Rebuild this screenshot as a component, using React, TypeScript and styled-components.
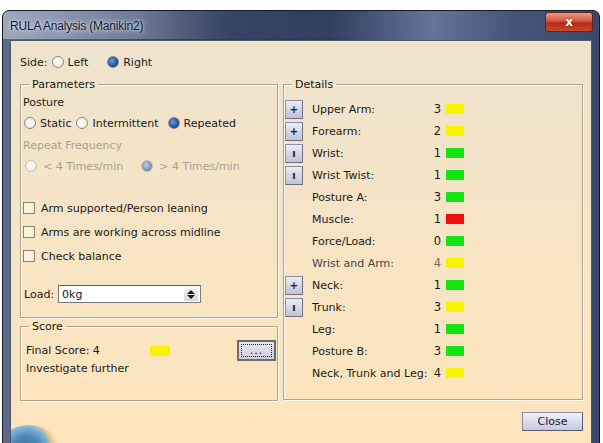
import styled, { createGlobalStyle } from "styled-components";

type Detail = {
	label: string;
	value: number;
	level: "ok" | "warn" | "bad";
	btn?: "+" | "ı";
	dim?: boolean;
};

const details: Detail[] = [
	{ label: "Upper Arm:", value: 3, level: "warn", btn: "+" },
	{ label: "Forearm:", value: 2, level: "warn", btn: "+" },
	{ label: "Wrist:", value: 1, level: "ok", btn: "ı" },
	{ label: "Wrist Twist:", value: 1, level: "ok", btn: "ı" },
	{ label: "Posture A:", value: 3, level: "ok" },
	{ label: "Muscle:", value: 1, level: "bad" },
	{ label: "Force/Load:", value: 0, level: "ok" },
	{ label: "Wrist and Arm:", value: 4, level: "warn", dim: true },
	{ label: "Neck:", value: 1, level: "ok", btn: "+" },
	{ label: "Trunk:", value: 3, level: "warn", btn: "ı" },
	{ label: "Leg:", value: 1, level: "ok" },
	{ label: "Posture B:", value: 3, level: "ok" },
	{ label: "Neck, Trunk and Leg:", value: 4, level: "warn" },
];

const swatch = {
	ok: "#12e512",
	warn: "#f8f400",
	bad: "#ec1010",
};

const GlobalStyle = createGlobalStyle`
	html, body {
		margin: 0;
		padding: 0;
		background: #fff;
	}
	body {
		font-family: "DejaVu Sans", "Liberation Sans", sans-serif;
		font-size: 11px;
		color: #1c1a18;
	}
`;

const Screen = styled.div`
	width: 603px;
	height: 443px;
	overflow: hidden;
	padding-top: 10px;
	box-sizing: border-box;
`;

const Window = styled.div`
	margin-left: 2px;
	width: 598px;
	height: 440px;
	box-sizing: border-box;
	border: 1px solid #151b29;
	border-radius: 7px 7px 0 0;
	background: linear-gradient(
		90deg,
		#5d6b88 0%,
		#4d5c80 10%,
		#2f3d5e 30%,
		#2c3a5a 55%,
		#637497 72%,
		#44537a 85%,
		#3a486b 100%
	);
	display: flex;
	flex-direction: column;
	position: relative;
`;

const TitleBar = styled.div`
	height: 28px;
	display: flex;
	align-items: flex-start;
	justify-content: space-between;
	padding: 0 6px 0 7px;
	background: linear-gradient(
		90deg,
		rgba(200, 208, 222, 0.6) 0%,
		rgba(176, 186, 206, 0.45) 22%,
		rgba(120, 134, 164, 0.1) 38%,
		rgba(0, 0, 0, 0) 100%
	);
	border-radius: 6px 6px 0 0;
`;

const Title = styled.span`
	margin-top: 8px;
	font-family: "Liberation Sans", Arial, sans-serif;
	font-size: 12px;
	color: #13182a;
	letter-spacing: -0.2px;
	text-shadow: 0 0 6px #dfe4ee, 0 0 3px #dfe4ee;
`;

const CloseX = styled.div`
	width: 46px;
	height: 18px;
	margin-top: 1px;
	border: 1px solid #5a2820;
	border-radius: 3px;
	background: linear-gradient(180deg, #e89a88 0%, #d4553e 45%, #b42a18 55%, #c84a30 100%);
	color: #fff;
	font-weight: bold;
	font-size: 12px;
	display: flex;
	align-items: center;
	justify-content: center;
	text-shadow: 0 0 2px #5a1a10;
`;

const Client = styled.div`
	margin: 1px 7px 0 7px;
	flex: 1;
	border: 1px solid #4d5569;
	border-bottom: none;
	background: linear-gradient(180deg, #efe3ce 0%, #f6e4c4 50%, #fde5bd 100%);
	padding: 14px 8px 0 9px;
	position: relative;
	overflow: hidden;
`;

const Row = styled.div<{ $mt?: number }>`
	display: flex;
	align-items: center;
	height: 14px;
	margin-top: ${(p) => p.$mt ?? 0}px;
`;

const Text = styled.span<{ $off?: boolean; $ml?: number }>`
	color: ${(p) => (p.$off ? "#aaa291" : "#1c1a18")};
	margin-left: ${(p) => p.$ml ?? 0}px;
	white-space: nowrap;
`;

const Radio = styled.span<{ $on?: boolean; $off?: boolean; $ml?: number }>`
	width: 10px;
	height: 10px;
	flex: none;
	border-radius: 50%;
	margin-left: ${(p) => p.$ml ?? 0}px;
	margin-right: 4px;
	border: 1px solid ${(p) => (p.$off ? "#c9c1b0" : "#8c8a86")};
	background: ${(p) =>
		p.$on
			? p.$off
				? "radial-gradient(circle at 40% 40%, #c4d0e4 0, #7a90b4 60%, #5c6f94 100%)"
				: "radial-gradient(circle at 40% 40%, #6d9ae0 0, #2856a4 55%, #122f66 100%)"
			: "radial-gradient(circle at 40% 40%, #ffffff 0, #f0ece2 70%, #dcd6c8 100%)"};
`;

const Check = styled.span`
	width: 10px;
	height: 10px;
	flex: none;
	border: 1px solid #8a8476;
	background: #fbf4de;
	margin-right: 6px;
`;

const Columns = styled.div`
	display: flex;
	gap: 5px;
	margin-top: 9px;
`;

const LeftCol = styled.div`
	width: 258px;
	display: flex;
	flex-direction: column;
	gap: 2px;
`;

const Group = styled.fieldset<{ $h: number; $w: number }>`
	margin: 0;
	width: ${(p) => p.$w}px;
	height: ${(p) => p.$h}px;
	box-sizing: border-box;
	padding: 0 1px 0 2px;
	border: 1px solid #aca493;
	box-shadow: inset 1px 1px 0 #fffaf0, 1px 1px 0 #fffaf0;
	min-width: 0;
`;

const Legend = styled.legend`
	padding: 0 3px;
	margin-left: 6px;
	font-size: 11px;
	color: #16140f;
	line-height: 13px;
`;

const Spacer = styled.div<{ $h: number }>`
	height: ${(p) => p.$h}px;
`;

const LoadBox = styled.div`
	width: 138px;
	height: 16px;
	margin-left: 4px;
	border: 1px solid #7b7b7b;
	border-top-color: #5f5f5f;
	background: #fff;
	display: flex;
	align-items: center;
	justify-content: space-between;
	padding-left: 3px;
	box-sizing: content-box;
	font-size: 11px;
	color: #1a1a2e;
`;

const Spin = styled.div`
	width: 14px;
	height: 14px;
	margin-right: 2px;
	display: flex;
	flex-direction: column;
	align-items: center;
	justify-content: center;
	background: linear-gradient(180deg, #f4f4f4, #d8d8d8);
	gap: 1px;
`;

const Tri = styled.span<{ $up?: boolean }>`
	width: 0;
	height: 0;
	border-left: 4px solid transparent;
	border-right: 4px solid transparent;
	${(p) => (p.$up ? "border-bottom: 4px solid #1a1a1a;" : "border-top: 4px solid #1a1a1a;")}
`;

const ScoreRow = styled.div`
	display: grid;
	grid-template-columns: 124px 20px 1fr 39px;
	align-items: center;
	padding-left: 3px;
	margin-top: 7px;
`;

const Swatch = styled.span<{ $c: string; $w?: number }>`
	display: block;
	width: ${(p) => p.$w ?? 18}px;
	height: 10px;
	background: ${(p) => p.$c};
`;

const DotsButton = styled.div`
	grid-column: 4;
	height: 21px;
	box-sizing: border-box;
	border: 2px solid #6a6a74;
	background: linear-gradient(180deg, #e6e6ee, #cfcfdc);
	display: flex;
	align-items: center;
	justify-content: center;
	padding: 2px;
`;

const Focus = styled.div`
	width: 100%;
	height: 100%;
	box-sizing: border-box;
	border: 1px dotted #222;
	display: flex;
	align-items: center;
	justify-content: center;
	font-size: 11px;
	line-height: 1;
	letter-spacing: 1px;
`;

const DetailList = styled.div`
	padding-top: 7px;
	margin-left: -1px;
`;

const DetailRow = styled.div`
	display: grid;
	grid-template-columns: 18px 128px 10px 18px;
	align-items: center;
	height: 22px;
`;

const SmallBtn = styled.div`
	width: 18px;
	height: 19px;
	box-sizing: border-box;
	border: 1px solid #8c8ca4;
	border-right-color: #6e6e86;
	border-bottom-color: #6e6e86;
	background: linear-gradient(180deg, #ececf6 0%, #d6d6e6 50%, #c2c2d6 100%);
	display: flex;
	align-items: center;
	justify-content: center;
	font-size: 10px;
	font-weight: bold;
	color: #222;
`;

const DLabel = styled.span<{ $dim?: boolean }>`
	padding-left: 9px;
	white-space: nowrap;
	color: ${(p) => (p.$dim ? "#4a463e" : "#1c1a18")};
`;

const DValue = styled.span<{ $dim?: boolean }>`
	text-align: right;
	color: ${(p) => (p.$dim ? "#6e6a5e" : "#1c1a18")};
	font-size: 11.5px;
`;

const SwatchCell = styled.span`
	padding-left: 5px;
`;

const Footer = styled.div`
	display: flex;
	justify-content: flex-end;
	margin-top: 11px;
`;

const CloseBtn = styled.div`
	width: 61px;
	height: 19px;
	box-sizing: border-box;
	border: 1px solid #8a8aa0;
	border-right-color: #5c5c74;
	border-bottom-color: #5c5c74;
	background: linear-gradient(180deg, #f2f2fa 0%, #dcdcec 50%, #c8c8dc 100%);
	display: flex;
	align-items: center;
	justify-content: center;
	font-size: 11px;
	color: #1a1a28;
`;

const Orb = styled.div`
	position: absolute;
	left: -12px;
	bottom: -22px;
	width: 60px;
	height: 46px;
	border-radius: 50%;
	background: radial-gradient(circle at 45% 55%, #3b6c98 0, #4f8ab8 35%, #7ab4d8 55%, rgba(250, 190, 110, 0.7) 68%, rgba(253, 229, 189, 0) 80%);
`;

export default function App() {
	return (
		<>
			<GlobalStyle />
			<Screen>
				<Window>
					<TitleBar>
						<Title>RULA Analysis (Manikin2)</Title>
						<CloseX>x</CloseX>
					</TitleBar>
					<Client>
						<Row>
							<Text $ml={0}>Side:</Text>
							<Radio $ml={4} />
							<Text>Left</Text>
							<Radio $on $ml={19} />
							<Text>Right</Text>
						</Row>
						<Columns>
							<LeftCol>
								<Group $w={258} $h={240}>
									<Legend>Parameters</Legend>
									<Spacer $h={4} />
									<Row>
										<Text>Posture</Text>
									</Row>
									<Row $mt={7}>
										<Radio $ml={1} />
										<Text>Static</Text>
										<Radio $ml={5} />
										<Text>Intermittent</Text>
										<Radio $ml={9} $on />
										<Text>Repeated</Text>
									</Row>
									<Row $mt={8}>
										<Text $off>Repeat Frequency</Text>
									</Row>
									<Row $mt={7}>
										<Radio $off $ml={2} />
										<Text $off $ml={2}>&lt; 4 Times/min</Text>
										<Radio $off $on $ml={18} />
										<Text $off $ml={2}>&gt; 4 Times/min</Text>
									</Row>
									<Row $mt={28}>
										<Check />
										<Text>Arm supported/Person leaning</Text>
									</Row>
									<Row $mt={10}>
										<Check />
										<Text>Arms are working across midline</Text>
									</Row>
									<Row $mt={10}>
										<Check />
										<Text>Check balance</Text>
									</Row>
									<Row $mt={24}>
										<Text $ml={1}>Load:</Text>
										<LoadBox>
											<span>0kg</span>
											<Spin>
												<Tri $up />
												<Tri />
											</Spin>
										</LoadBox>
									</Row>
								</Group>
								<Group $w={258} $h={81}>
									<Legend>Score</Legend>
									<ScoreRow>
										<Text>Final Score: 4</Text>
										<Swatch $c={swatch.warn} $w={20} />
										<DotsButton>
											<Focus>...</Focus>
										</DotsButton>
									</ScoreRow>
									<Row $mt={0}>
										<Text $ml={3}>Investigate further</Text>
									</Row>
								</Group>
							</LeftCol>
							<Group $w={300} $h={322}>
								<Legend>Details</Legend>
								<DetailList>
									{details.map((d) => (
										<DetailRow key={d.label}>
											{d.btn ? <SmallBtn>{d.btn}</SmallBtn> : <span />}
											<DLabel $dim={d.dim}>{d.label}</DLabel>
											<DValue $dim={d.dim}>{d.value}</DValue>
											<SwatchCell>
												<Swatch $c={swatch[d.level]} />
											</SwatchCell>
										</DetailRow>
									))}
								</DetailList>
							</Group>
						</Columns>
						<Footer>
							<CloseBtn>Close</CloseBtn>
						</Footer>
						<Orb />
					</Client>
				</Window>
			</Screen>
		</>
	);
}
